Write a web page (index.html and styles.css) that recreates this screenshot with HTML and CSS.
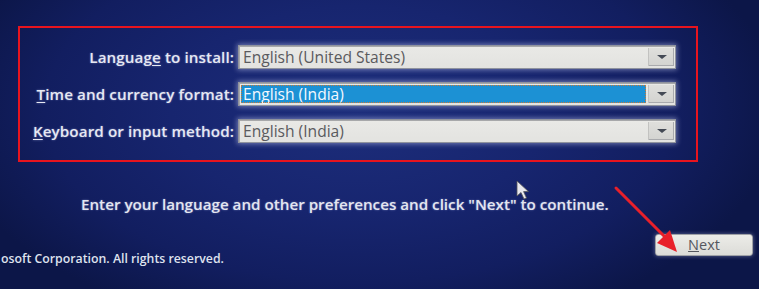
FILE: index.html
```html
<!DOCTYPE html>
<html>
<head>
<meta charset="utf-8">
<link rel="stylesheet" href="styles.css">
</head>
<body>
<div class="screen">
  <section class="setup">
    <div class="row">
      <label class="lbl">Languag<u>e</u> to install:</label>
      <div class="combo">
        <span class="value">English (United States)</span>
        <span class="btn"><span class="tri"></span></span>
      </div>
    </div>
    <div class="row">
      <label class="lbl"><u>T</u>ime and currency format:</label>
      <div class="combo">
        <span class="value selected">English (India)</span>
        <span class="btn"><span class="tri"></span></span>
      </div>
    </div>
    <div class="row">
      <label class="lbl"><u>K</u>eyboard or input method:</label>
      <div class="combo">
        <span class="value">English (India)</span>
        <span class="btn"><span class="tri"></span></span>
      </div>
    </div>
  </section>
  <p class="hint">Enter your language and other preferences and click "Next" to continue.</p>
  <div class="footer">
    <span class="copy">osoft Corporation. All rights reserved.</span>
    <button class="next"><u>N</u>ext</button>
  </div>

  <svg class="cursor" width="16" height="22" viewBox="0 0 16 22">
    <path d="M1 1 L1 16 L5 12.5 L8 19 L10.5 18 L7.6 11.6 L12.5 11.6 Z" fill="#e8e8ee" stroke="#555" stroke-width="0.8"/>
  </svg>
  <svg class="arrow" width="80" height="80" viewBox="0 0 80 80">
    <line x1="3" y1="3" x2="54" y2="54" stroke="#e8202a" stroke-width="3" stroke-linecap="round"/>
    <path d="M64 67 L44 58 L57 45 Z" fill="#e8202a"/>
  </svg>
</div>
</body>
</html>
```

FILE: styles.css
```css
* { box-sizing: border-box; }
html, body { margin: 0; padding: 0; }
body {
  width: 759px;
  height: 289px;
  overflow: hidden;
  font-family: "Open Sans", "Noto Sans", "DejaVu Sans", sans-serif;
}
.screen {
  position: relative;
  width: 759px;
  height: 289px;
  padding-top: 26px;
  background:
    radial-gradient(ellipse 420px 230px at 360px 110px, #1d2e7c 0%, #17256f 45%, #121e60 75%, #0c1648 100%);
  overflow: hidden;
}
.setup {
  margin-left: 18px;
  width: 680px;
  height: 136px;
  border: 2px solid #e8141e;
  padding: 17px 0 0 0;
  display: flex;
  flex-direction: column;
  gap: 13px;
}
.row {
  display: grid;
  grid-template-columns: 214px 438px;
  column-gap: 4px;
  align-items: center;
  height: 24px;
}
.lbl {
  text-align: right;
  color: #e6e8f2;
  font-size: 15.2px;
  font-weight: 600;
  letter-spacing: 0.1px;
  white-space: nowrap;
  text-shadow: 0 0 2px rgba(200,210,255,.5);
}
.lbl u { text-underline-offset: 2px; }
.combo {
  height: 24px;
  display: flex;
  background: linear-gradient(#e9e9e6, #e3e3e0);
  border: 1px solid #8f939e;
  box-shadow: 0 0 5px 1px rgba(220,225,255,.45), inset 1px 1px 0 #a7a8aa;
  padding: 2px 1px 2px 2px;
}
.value {
  flex: 1;
  display: flex;
  align-items: center;
  padding-left: 2px;
  color: #5a5a5e;
  font-size: 15.6px;
  white-space: nowrap;
}
.value.selected {
  background: #1c91d4;
  color: #f4f8ff;
  outline: 1px dotted #c8793a;
  outline-offset: -1px;
  margin-right: 2px;
}
.btn {
  width: 26px;
  display: flex;
  align-items: center;
  justify-content: center;
  background: linear-gradient(#dfdfdc, #d3d3d0);
  border-left: 1px solid #c2c2c0;
  box-shadow: inset -1px -1px 0 #a9aaad;
}
.tri {
  width: 0;
  height: 0;
  border-left: 5px solid transparent;
  border-right: 5px solid transparent;
  border-top: 4px solid #444a55;
}
.hint {
  margin: 0;
  padding: 32px 0 0 81px;
  line-height: 20px;
  color: #e4e6f0;
  font-size: 15.2px;
  font-weight: 600;
  white-space: nowrap;
  text-shadow: 0 0 2px rgba(200,210,255,.5);
}
.footer {
  display: flex;
  align-items: flex-start;
  justify-content: space-between;
  padding: 20px 6px 0 1px;
}
.copy {
  color: #dfe2ee;
  font-size: 12.3px;
  line-height: 16px;
  font-weight: 600;
  margin-top: 17px;
  white-space: nowrap;
}
.next {
  width: 98px;
  height: 22px;
  padding: 0;
  font-family: inherit;
  font-size: 14.5px;
  line-height: 20px;
  color: #55575e;
  background: linear-gradient(#ecece8, #dcdcd8);
  border: 1px solid #9fa1a6;
  border-radius: 3px;
  box-shadow: 0 0 4px rgba(220,225,255,.4);
}
.cursor {
  position: absolute;
  left: 516px;
  top: 180px;
}
.arrow {
  position: absolute;
  left: 613px;
  top: 185px;
}
```
